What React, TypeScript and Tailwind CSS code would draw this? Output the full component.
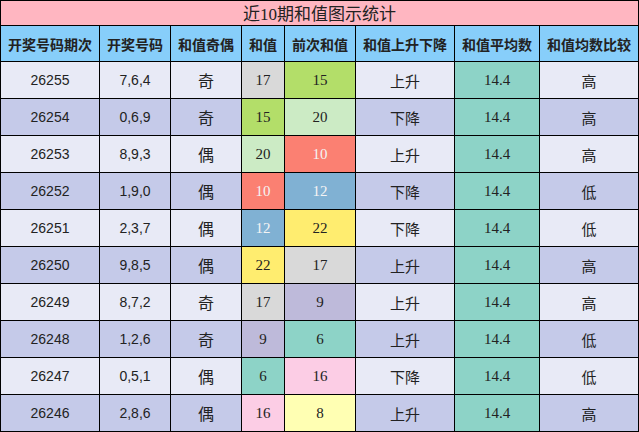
import React from "react";

type Row = [string, string, string, number, number, string, string];

const rows: Row[] = [
  ["26255", "7,6,4", "奇", 17, 15, "上升", "高"],
  ["26254", "0,6,9", "奇", 15, 20, "下降", "高"],
  ["26253", "8,9,3", "偶", 20, 10, "上升", "高"],
  ["26252", "1,9,0", "偶", 10, 12, "下降", "低"],
  ["26251", "2,3,7", "偶", 12, 22, "下降", "低"],
  ["26250", "9,8,5", "偶", 22, 17, "上升", "高"],
  ["26249", "8,7,2", "奇", 17, 9, "上升", "高"],
  ["26248", "1,2,6", "奇", 9, 6, "上升", "低"],
  ["26247", "0,5,1", "偶", 6, 16, "下降", "低"],
  ["26246", "2,8,6", "偶", 16, 8, "上升", "高"],
];

const sumColor: Record<number, string> = {
  17: "bg-[#d9d9d9] text-[#222]",
  15: "bg-[#b3de69] text-[#222]",
  20: "bg-[#ccebc5] text-[#222]",
  10: "bg-[#fb8072] text-[#f4f4f4]",
  12: "bg-[#80b1d3] text-[#f4f4f4]",
  22: "bg-[#ffed6f] text-[#222]",
  9: "bg-[#bebada] text-[#222]",
  6: "bg-[#8dd3c7] text-[#222]",
  16: "bg-[#fccde5] text-[#222]",
  8: "bg-[#ffffb3] text-[#222]",
};

const headers = ["开奖号码期次", "开奖号码", "和值奇偶", "和值", "前次和值", "和值上升下降", "和值平均数", "和值均数比较"];
const widths = ["w-[99px]", "w-[71px]", "w-[71px]", "w-[43px]", "w-[71px]", "w-[99px]", "w-[85px]", "w-[99px]"];

const serif = "font-['Liberation_Serif','Noto_Sans_CJK_SC',serif]";
const sans = "font-['Liberation_Sans','Noto_Sans_CJK_SC',sans-serif]";
const cjk = "font-['Noto_Sans_CJK_SC','Liberation_Sans',sans-serif]";

export default function App() {
  return (
    <div className="w-[639px] h-[432px] bg-white">
      <table className="table-fixed border-collapse w-[639px] text-[#222]">
        <colgroup>
          {widths.map((w, i) => (
            <col key={i} className={w} />
          ))}
        </colgroup>
        <thead>
          <tr className="h-[25px]">
            <th colSpan={8} className={`border-[1.5px] border-black bg-[#ffb6c1] font-normal text-[17px] leading-none ${cjk}`}>
              近<span className={serif}>10</span>期和值图示统计
            </th>
          </tr>
          <tr className="h-[36px]">
            {headers.map((h) => (
              <th key={h} className={`border-[1.5px] border-black bg-[#87cefa] font-bold text-[14px] leading-none px-0 ${cjk}`}>
                {h}
              </th>
            ))}
          </tr>
        </thead>
        <tbody>
          {rows.map((r, i) => {
            const bg = i % 2 === 0 ? "bg-[#e8eaf6]" : "bg-[#c5cae9]";
            const cell = "border-[1.5px] border-black text-center leading-none p-0";
            return (
              <tr key={r[0]} className="h-[37px]">
                <td className={`${cell} ${bg} ${sans} text-[14px]`}>{r[0]}</td>
                <td className={`${cell} ${bg} ${sans} text-[14px]`}>{r[1]}</td>
                <td className={`${cell} ${bg} ${cjk} text-[16px]`}>{r[2]}</td>
                <td className={`${cell} ${sumColor[r[3]]} ${serif} text-[15px]`}>{r[3]}</td>
                <td className={`${cell} ${sumColor[r[4]]} ${serif} text-[15px]`}>{r[4]}</td>
                <td className={`${cell} ${bg} ${cjk} text-[15px]`}>{r[5]}</td>
                <td className={`${cell} bg-[#8dd3c7] ${serif} text-[15px]`}>14.4</td>
                <td className={`${cell} ${bg} ${cjk} text-[15px]`}>{r[6]}</td>
              </tr>
            );
          })}
        </tbody>
      </table>
    </div>
  );
}
